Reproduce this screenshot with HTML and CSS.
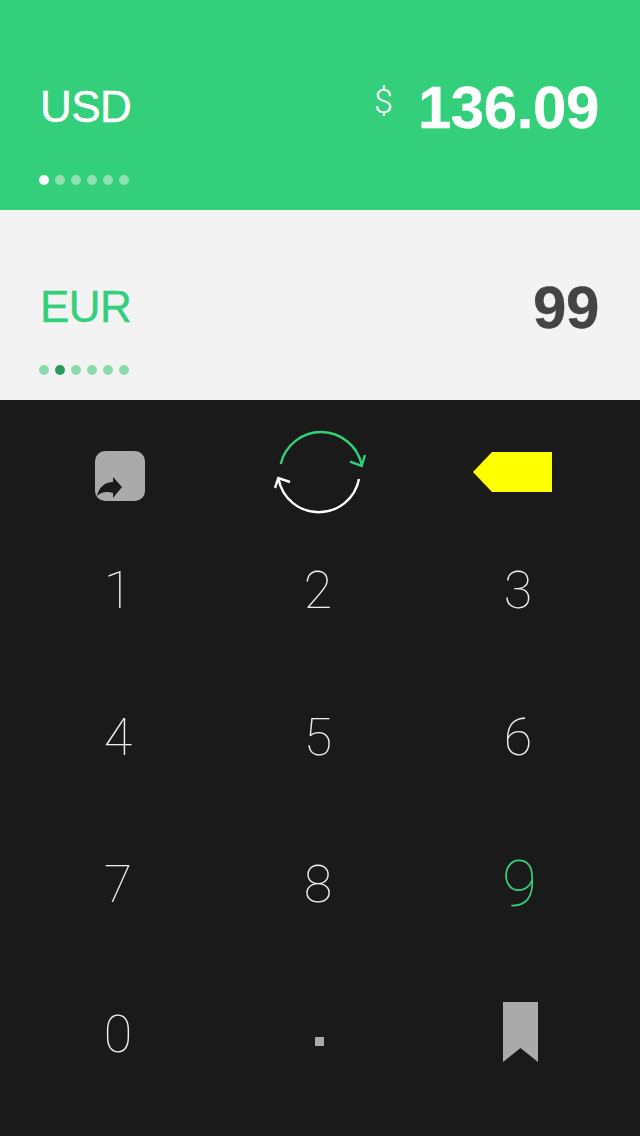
FILE: index.html
```html
<!DOCTYPE html>
<html lang="en">
<head>
    <meta charset="UTF-8">
    <meta name="viewport" content="width=device-width, initial-scale=1.0">
    <title>Currency Converter</title>
    <link rel="stylesheet" href="styles.css">
</head>
<body>
    <section class="currency currency-from">
        <div class="currency-row">
            <span class="code">USD</span>
            <span class="symbol">$</span>
            <span class="amount">136.09</span>
        </div>
        <div class="dots">
            <span class="dot active"></span>
            <span class="dot"></span>
            <span class="dot"></span>
            <span class="dot"></span>
            <span class="dot"></span>
            <span class="dot"></span>
        </div>
    </section>

    <section class="currency currency-to">
        <div class="currency-row">
            <span class="code">EUR</span>
            <span class="amount">99</span>
        </div>
        <div class="dots">
            <span class="dot"></span>
            <span class="dot active"></span>
            <span class="dot"></span>
            <span class="dot"></span>
            <span class="dot"></span>
            <span class="dot"></span>
        </div>
    </section>

    <main class="keypad">
        <div class="tools">
            <div class="key">
                <svg class="share-icon" width="50" height="50" viewBox="0 0 50 50">
                    <rect width="50" height="50" rx="10" fill="#aaaaaa"/>
                    <path d="M2 45 C4 36 10 31 18 31 L18 26 L27 36 L18 47 L18 42 C12 40 6 41 2 45 Z" fill="#1a1a1a"/>
                </svg>
            </div>
            <div class="key">
                <svg width="96" height="88" viewBox="0 0 96 88" fill="none" stroke-width="2.4">
                    <path d="M10.7 36 A41.5 41.5 0 0 1 91.7 37" stroke="#34cf7a"/>
                    <path d="M80 33.7 L91.7 38 L95 27" stroke="#34cf7a"/>
                    <path d="M89 51 A41 41 0 0 1 8.5 51" stroke="#ffffff"/>
                    <path d="M5 60 L8.3 50 L20 54" stroke="#ffffff"/>
                </svg>
            </div>
            <div class="key">
                <svg class="back-icon" width="80" height="40" viewBox="0 0 80 40">
                    <path d="M19 0 H79 V40 H19 L0 20 Z" fill="#ffff00"/>
                </svg>
            </div>
        </div>
        <div class="digits">
            <button class="key digit">1</button>
            <button class="key digit">2</button>
            <button class="key digit">3</button>
            <button class="key digit">4</button>
            <button class="key digit">5</button>
            <button class="key digit">6</button>
            <button class="key digit">7</button>
            <button class="key digit">8</button>
            <button class="key digit pressed">9</button>
            <button class="key digit">0</button>
            <div class="key"><span class="point"></span></div>
            <div class="key">
                <svg class="bookmark-icon" width="35" height="60" viewBox="0 0 35 60">
                    <path d="M0 0 H35 V60 L17.5 46 L0 60 Z" fill="#aaaaaa"/>
                </svg>
            </div>
        </div>
    </main>
</body>
</html>
```

FILE: styles.css
```css
body {
    font-family: "Liberation Sans", Arial, sans-serif;
    margin: 0;
    width: 640px;
    height: 1136px;
    overflow: hidden;
    display: flex;
    flex-direction: column;
}

.currency {
    box-sizing: border-box;
    padding: 0 41px 0 39px;
    display: flex;
    flex-direction: column;
}

.currency-from {
    height: 210px;
    padding-top: 72px;
    background-color: #34cf7a;
    color: white;
}

.currency-to {
    height: 190px;
    padding-top: 62px;
    background-color: #f3f3f3;
}

.currency-row {
    height: 70px;
    display: flex;
    align-items: center;
}

.code {
    font-size: 44px;
    letter-spacing: -0.5px;
    margin-left: 1px;
    margin-right: auto;
    -webkit-text-stroke: 0.4px currentColor;
}

.currency-to .code {
    color: #34cf7a;
}

.symbol {
    font-family: "Roboto", sans-serif;
    font-weight: 300;
    font-size: 34px;
    margin: 0 25px 12px 0;
}

.amount {
    font-size: 60px;
    font-weight: bold;
    letter-spacing: -0.4px;
    -webkit-text-stroke: 0.3px currentColor;
}

.currency-to .amount {
    color: #444444;
}

.dots {
    display: flex;
    gap: 6px;
    margin-top: 33px;
}

.currency-to .dots {
    margin-top: 23px;
}

.dot {
    width: 10px;
    height: 10px;
    border-radius: 50%;
    background-color: #8fe0b3;
}

.dot.active {
    background-color: white;
}

.currency-to .dot {
    background-color: #8adcaf;
}

.currency-to .dot.active {
    background-color: #2a9a5c;
}

.keypad {
    flex: 1;
    background-color: #1a1a1a;
    padding: 22px 22px 0 18px;
}

.tools {
    display: grid;
    grid-template-columns: repeat(3, 200px);
    height: 100px;
}

.digits {
    display: grid;
    grid-template-columns: repeat(3, 200px);
    grid-template-rows: 147px 147px 147px 153px;
    margin-top: -5px;
}

.key {
    display: flex;
    align-items: center;
    justify-content: center;
}

.share-icon {
    margin: 8px 0 0 4px;
}

.back-icon {
    margin-right: 10px;
}

.bookmark-icon {
    margin: 0 0 6px 5px;
}

.digit {
    background: none;
    border: none;
    padding: 0;
    font-family: "Roboto", sans-serif;
    font-weight: 100;
    font-size: 52px;
    color: #eeeeee;
}

.digit.pressed {
    font-size: 64px;
    padding-left: 3px;
    color: #34cf7a;
}

.point {
    width: 9px;
    height: 9px;
    margin: 13px 0 0 2px;
    background-color: #aaaaaa;
}
```
